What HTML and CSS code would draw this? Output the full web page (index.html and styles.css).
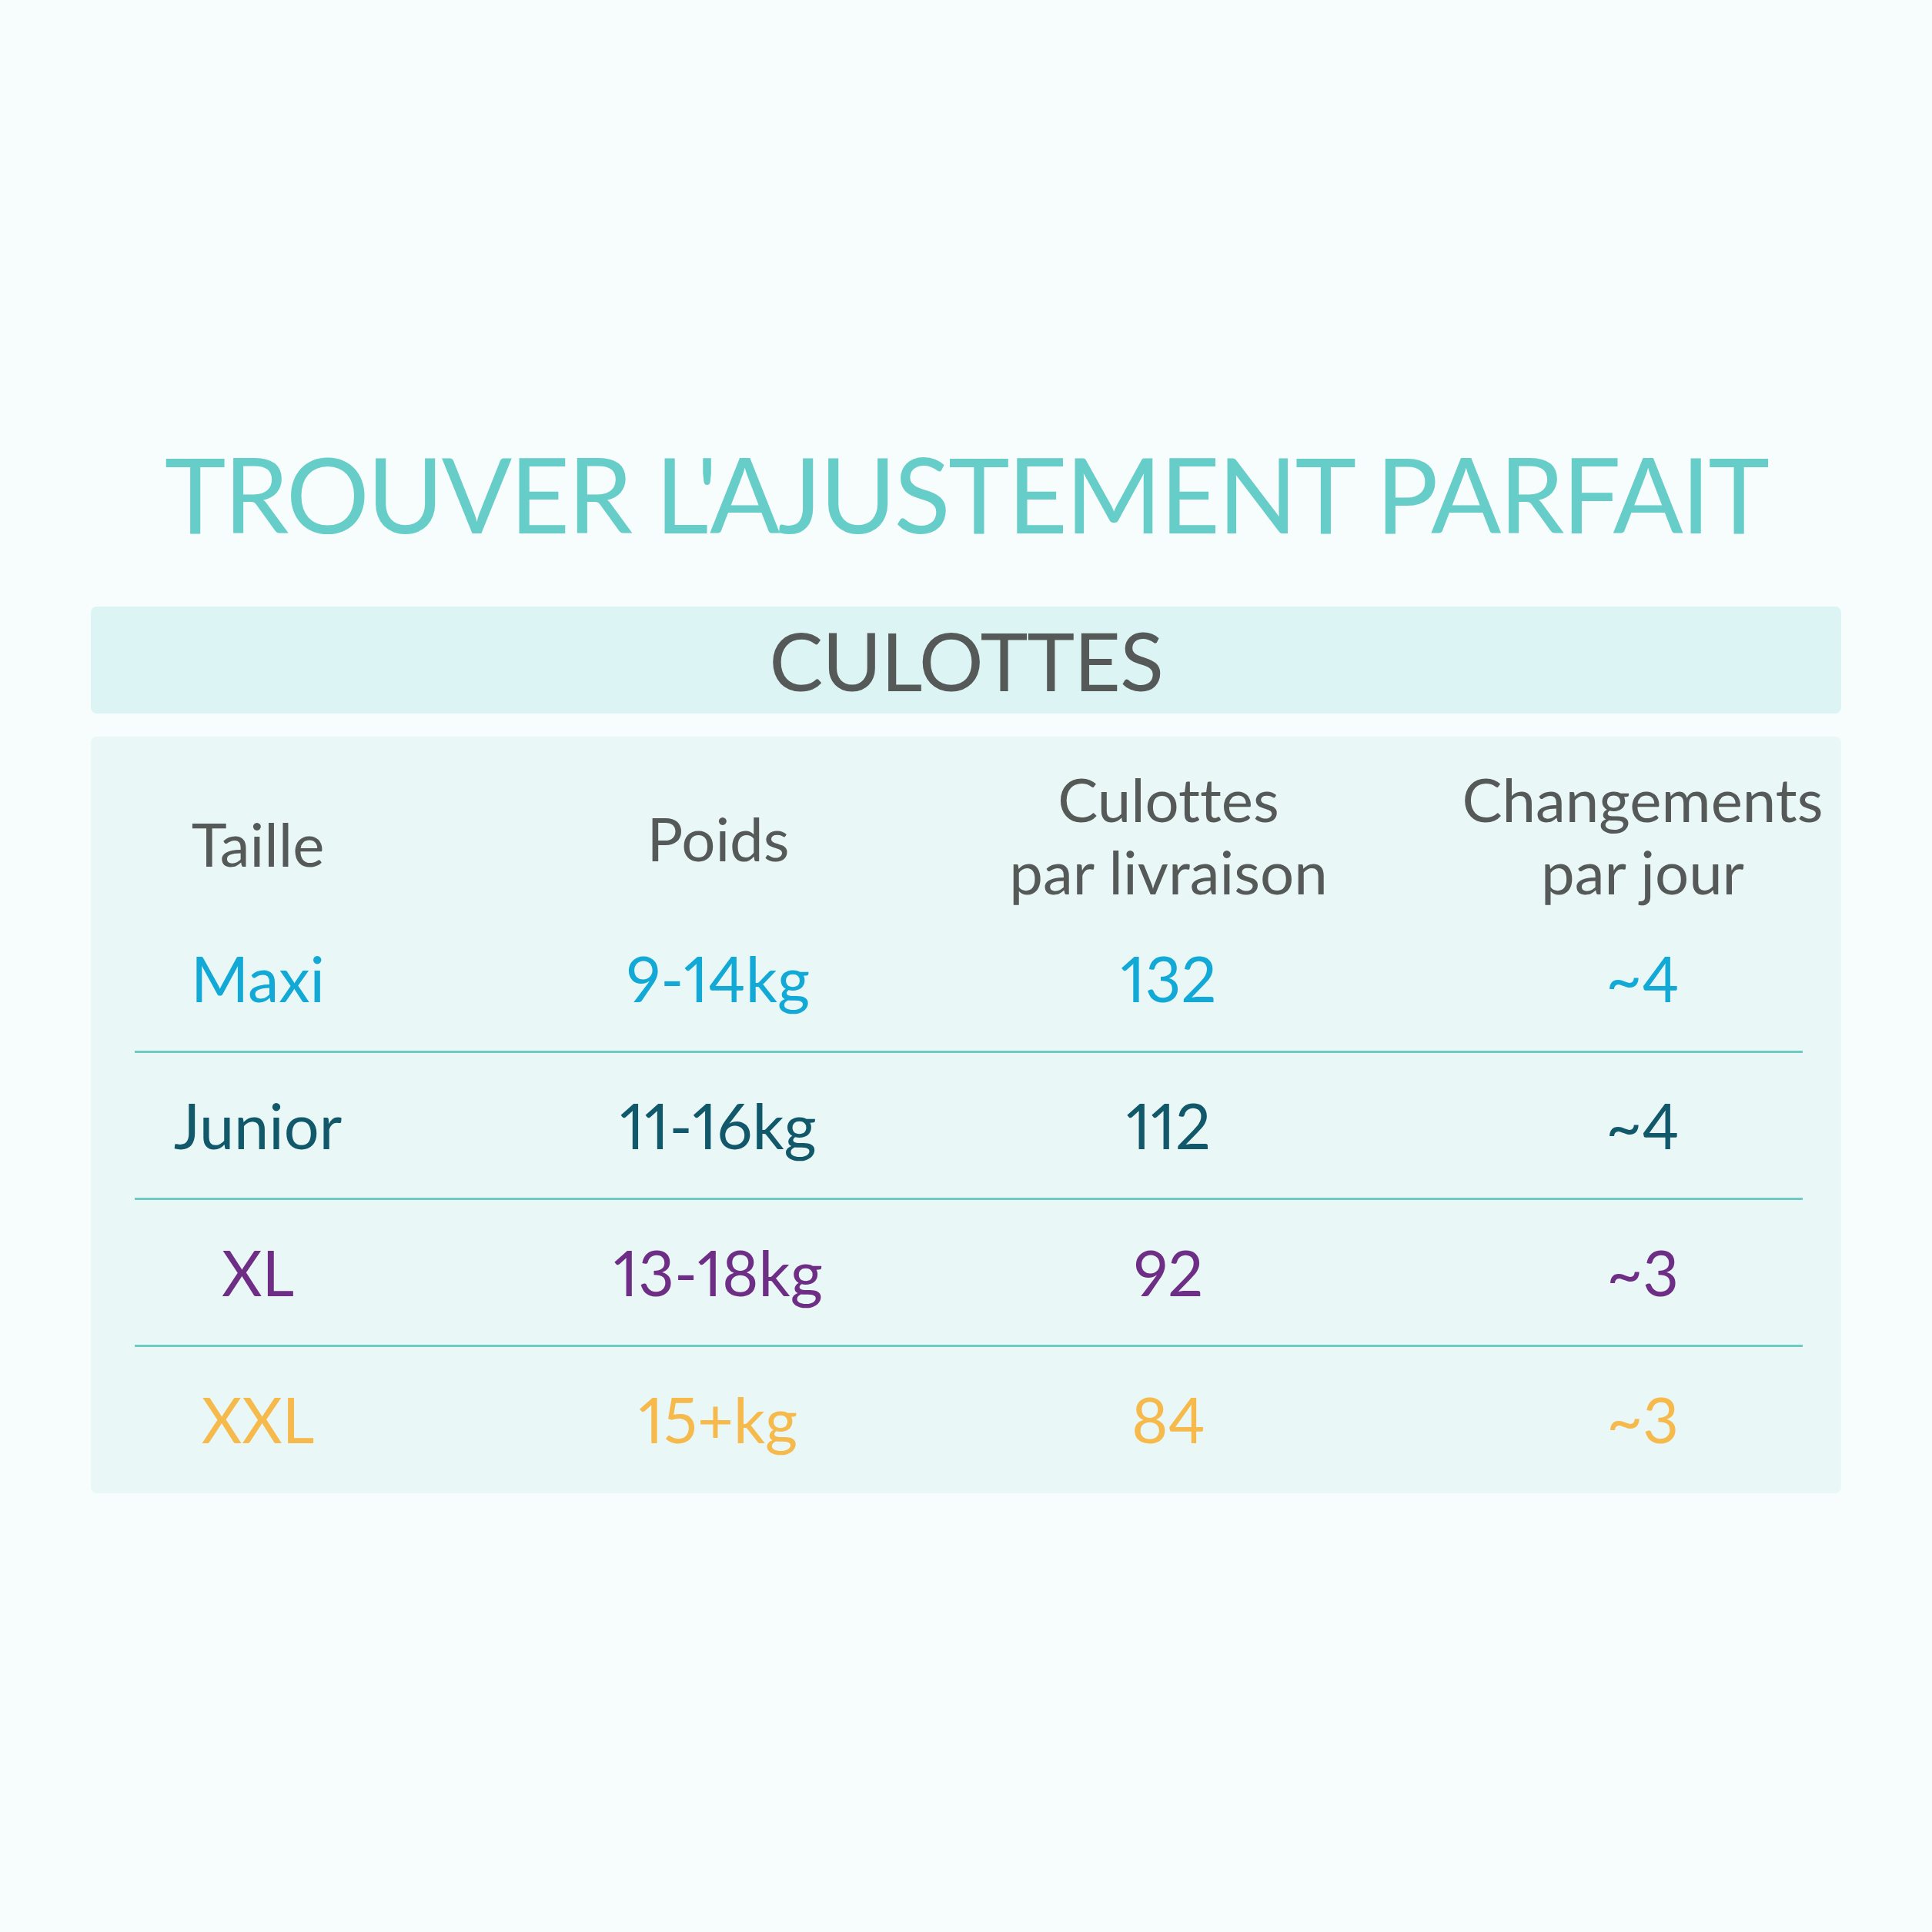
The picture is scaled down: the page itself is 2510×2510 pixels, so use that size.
FILE: index.html
```html
<!DOCTYPE html>
<html lang="fr">
<head>
<meta charset="utf-8">
<title>Trouver l'ajustement parfait</title>
<link rel="stylesheet" href="styles.css">
</head>
<body>
<main class="page">
  <h1 class="title">TROUVER L'AJUSTEMENT PARFAIT</h1>
  <div class="card-head">CULOTTES</div>
  <section class="panel">
    <div class="row head">
      <div class="cell c1 taille">Taille</div>
      <div class="cell c2 poids">Poids</div>
      <div class="cell c3">Culottes<br>par livraison</div>
      <div class="cell c4">Changements<br>par jour</div>
    </div>
    <div class="row data maxi">
      <div class="cell c1">Maxi</div>
      <div class="cell c2">9-14kg</div>
      <div class="cell c3">132</div>
      <div class="cell c4">~4</div>
    </div>
    <div class="rule"></div>
    <div class="row data junior">
      <div class="cell c1">Junior</div>
      <div class="cell c2">11-16kg</div>
      <div class="cell c3">112</div>
      <div class="cell c4">~4</div>
    </div>
    <div class="rule"></div>
    <div class="row data xl">
      <div class="cell c1">XL</div>
      <div class="cell c2">13-18kg</div>
      <div class="cell c3">92</div>
      <div class="cell c4">~3</div>
    </div>
    <div class="rule"></div>
    <div class="row data xxl">
      <div class="cell c1">XXL</div>
      <div class="cell c2">15+kg</div>
      <div class="cell c3">84</div>
      <div class="cell c4">~3</div>
    </div>
  </section>
</main>
</body>
</html>
```

FILE: styles.css
```css
html, body {
  margin: 0;
  padding: 0;
  background: #f7fcfc;
}

body {
  font-family: "Lato", "Noto Sans", sans-serif;
  font-variant-ligatures: none;
  width: 2510px;
  height: 2510px;
}

.page {
  padding: 560px 118px 0;
}

.title {
  margin: 0 0 66px;
  font-size: 135px;
  font-weight: 400;
  line-height: 162px;
  color: #66cdc9;
  text-align: center;
  letter-spacing: -0.02em;
  white-space: nowrap;
}

.card-head {
  height: 139px;
  display: flex;
  align-items: center;
  justify-content: center;
  background: #dcf4f4;
  border-radius: 8px;
  font-size: 105px;
  line-height: 1;
  color: #555958;
  letter-spacing: -0.01em;
}

.panel {
  margin-top: 30px;
  background: #e9f7f6;
  border-radius: 8px;
  padding-bottom: 2px;
}

.row {
  display: grid;
  grid-template-columns: 434px 762px 408px 1fr;
  justify-items: center;
  align-items: center;
  white-space: nowrap;
  font-size: 81px;
  font-variant-numeric: proportional-nums;
}

.cell.c4 {
  padding-left: 154px;
}

.head {
  height: 220px;
  box-sizing: border-box;
  padding: 34px 0 0;
  color: #555958;
  font-size: 78px;
  line-height: 94px;
  text-align: center;
}

.head .taille {
  padding-top: 22px;
}

.head .poids {
  padding-top: 7px;
}

.data {
  height: 188px;
  line-height: 1.2;
}

.rule {
  height: 3px;
  margin: 0 50px 0 57px;
  background: #6fcac5;
}

.maxi { color: #12a9d6; }
.junior { color: #11586a; }
.xl { color: #6e2e86; }
.xxl { color: #f6b94b; }
```
